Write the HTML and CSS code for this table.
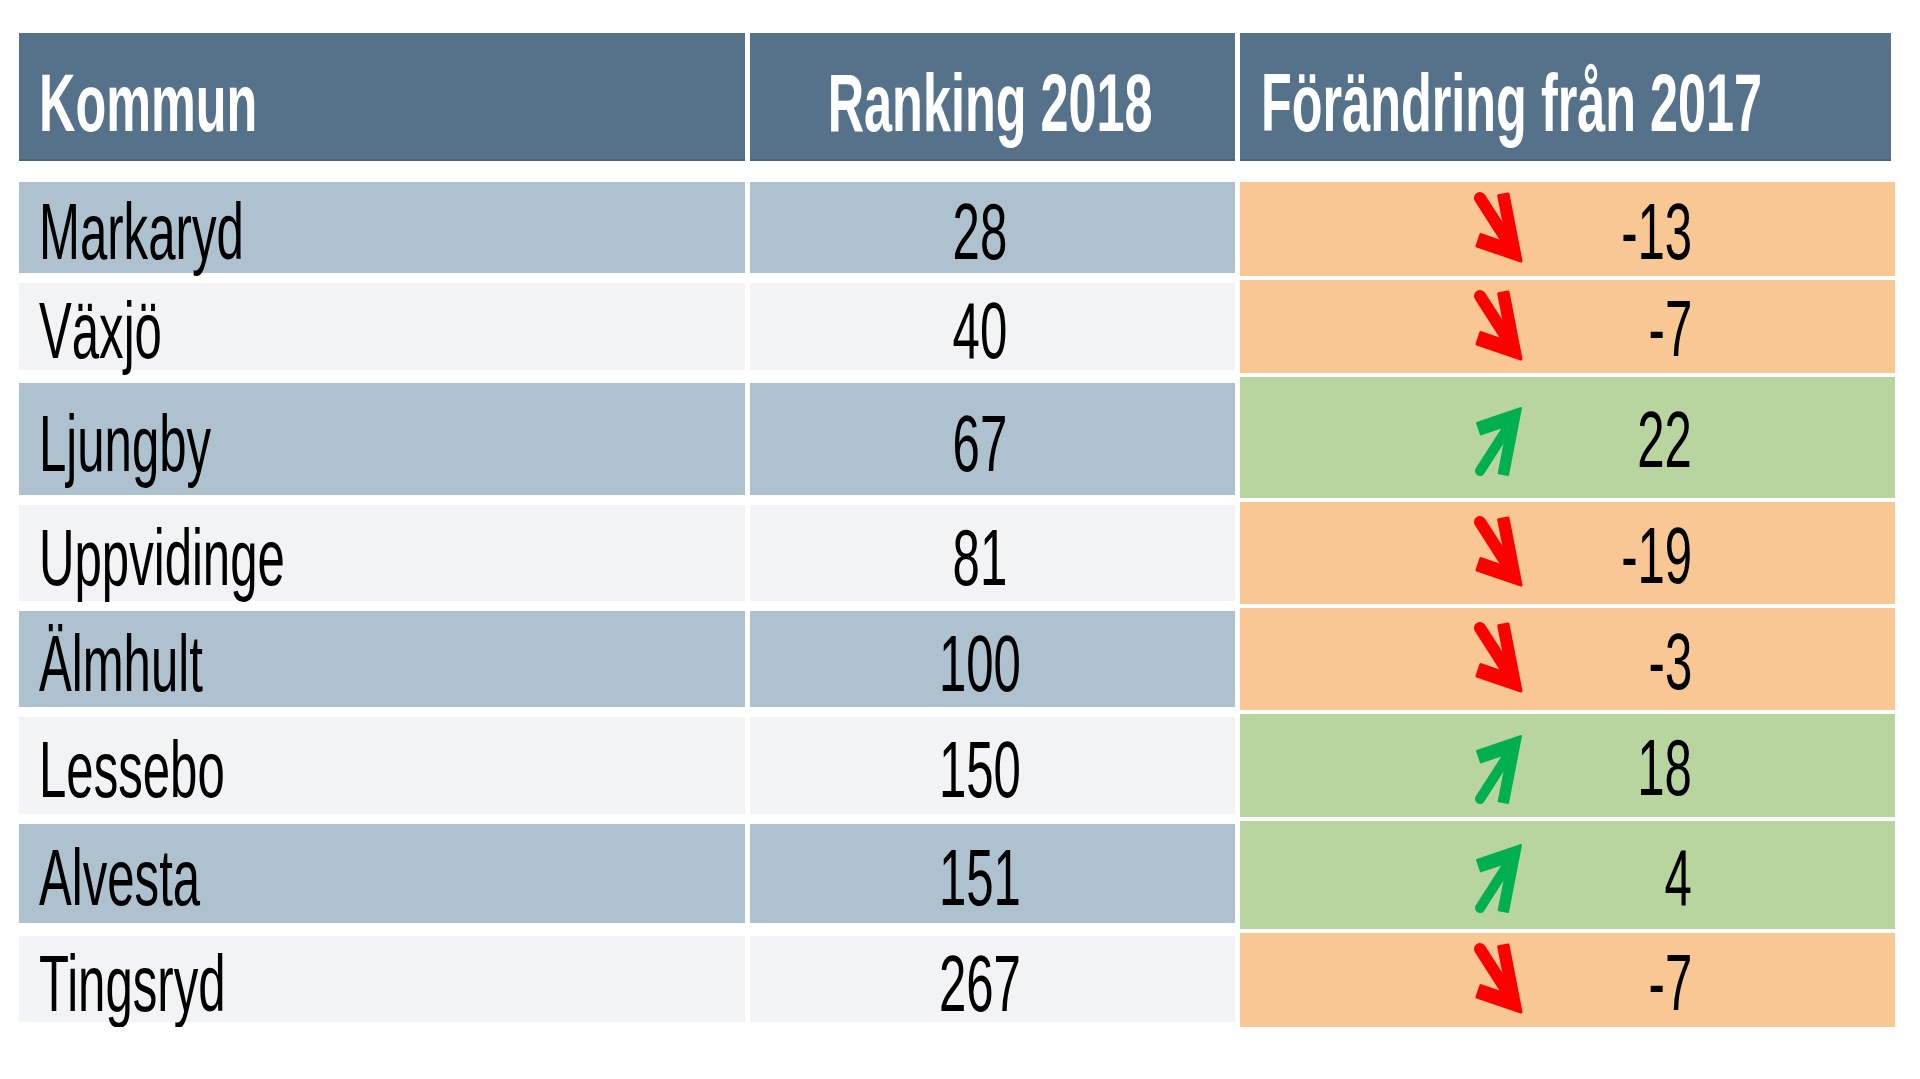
FILE: index.html
```html
<!DOCTYPE html>
<html lang="sv">
<head>
<meta charset="utf-8">
<title>Ranking 2018</title>
<link rel="stylesheet" href="styles.css">
</head>
<body>
<div class="table">
  <div class="head">
    <div class="hc hc-name"><span class="t">Kommun</span></div>
    <div class="hc hc-rank"><span class="t tc">Ranking 2018</span></div>
    <div class="hc hc-change"><span class="t">Förändring från 2017</span></div>
  </div>

  <div class="row r1 odd">
    <div class="c name"><span class="t">Markaryd</span></div>
    <div class="c rank"><span class="t tc">28</span></div>
    <div class="c change down">
      <svg class="arrow" viewBox="0 0 50 70" width="50" height="70"><path class="shaft" d="M8 6 L40 56"/><path class="head" d="M5 54 L49 69 L36 2 L26.7 3.8 L36 51.8 L8.9 42.6 Z"/></svg>
      <div class="num"><span class="t tr">-13</span></div>
    </div>
  </div>

  <div class="row r2 even">
    <div class="c name"><span class="t">Växjö</span></div>
    <div class="c rank"><span class="t tc">40</span></div>
    <div class="c change down">
      <svg class="arrow" viewBox="0 0 50 70" width="50" height="70"><path class="shaft" d="M8 6 L40 56"/><path class="head" d="M5 54 L49 69 L36 2 L26.7 3.8 L36 51.8 L8.9 42.6 Z"/></svg>
      <div class="num"><span class="t tr">-7</span></div>
    </div>
  </div>

  <div class="row r3 odd">
    <div class="c name"><span class="t">Ljungby</span></div>
    <div class="c rank"><span class="t tc">67</span></div>
    <div class="c change up">
      <svg class="arrow" viewBox="0 0 50 70" width="50" height="70"><path class="shaft" d="M8 6 L40 56"/><path class="head" d="M5 54 L49 69 L36 2 L26.7 3.8 L36 51.8 L8.9 42.6 Z"/></svg>
      <div class="num"><span class="t tr">22</span></div>
    </div>
  </div>

  <div class="row r4 even">
    <div class="c name"><span class="t">Uppvidinge</span></div>
    <div class="c rank"><span class="t tc">81</span></div>
    <div class="c change down">
      <svg class="arrow" viewBox="0 0 50 70" width="50" height="70"><path class="shaft" d="M8 6 L40 56"/><path class="head" d="M5 54 L49 69 L36 2 L26.7 3.8 L36 51.8 L8.9 42.6 Z"/></svg>
      <div class="num"><span class="t tr">-19</span></div>
    </div>
  </div>

  <div class="row r5 odd">
    <div class="c name"><span class="t">Älmhult</span></div>
    <div class="c rank"><span class="t tc">100</span></div>
    <div class="c change down">
      <svg class="arrow" viewBox="0 0 50 70" width="50" height="70"><path class="shaft" d="M8 6 L40 56"/><path class="head" d="M5 54 L49 69 L36 2 L26.7 3.8 L36 51.8 L8.9 42.6 Z"/></svg>
      <div class="num"><span class="t tr">-3</span></div>
    </div>
  </div>

  <div class="row r6 even">
    <div class="c name"><span class="t">Lessebo</span></div>
    <div class="c rank"><span class="t tc">150</span></div>
    <div class="c change up">
      <svg class="arrow" viewBox="0 0 50 70" width="50" height="70"><path class="shaft" d="M8 6 L40 56"/><path class="head" d="M5 54 L49 69 L36 2 L26.7 3.8 L36 51.8 L8.9 42.6 Z"/></svg>
      <div class="num"><span class="t tr">18</span></div>
    </div>
  </div>

  <div class="row r7 odd">
    <div class="c name"><span class="t">Alvesta</span></div>
    <div class="c rank"><span class="t tc">151</span></div>
    <div class="c change up">
      <svg class="arrow" viewBox="0 0 50 70" width="50" height="70"><path class="shaft" d="M8 6 L40 56"/><path class="head" d="M5 54 L49 69 L36 2 L26.7 3.8 L36 51.8 L8.9 42.6 Z"/></svg>
      <div class="num"><span class="t tr">4</span></div>
    </div>
  </div>

  <div class="row r8 even">
    <div class="c name"><span class="t">Tingsryd</span></div>
    <div class="c rank"><span class="t tc">267</span></div>
    <div class="c change down">
      <svg class="arrow" viewBox="0 0 50 70" width="50" height="70"><path class="shaft" d="M8 6 L40 56"/><path class="head" d="M5 54 L49 69 L36 2 L26.7 3.8 L36 51.8 L8.9 42.6 Z"/></svg>
      <div class="num"><span class="t tr">-7</span></div>
    </div>
  </div>
</div>
</body>
</html>
```

FILE: styles.css
```css
html, body {
  margin: 0;
  padding: 0;
  background: #ffffff;
  overflow: hidden;
}

body {
  font-family: "Liberation Sans", Arial, sans-serif;
  color: #000;
}

.table {
  padding: 33px 0 0 19px;
  display: flex;
  flex-direction: column;
  gap: 4px;
}

.head,
.row {
  display: grid;
  grid-template-columns: 726px 485px 655px;
  grid-template-rows: minmax(0, 1fr);
  column-gap: 5px;
}

.head {
  height: 128px;
  margin-bottom: 17px;
}

.hc {
  background: #56728b;
  border-bottom: 2px solid #4b657c;
  color: #ffffff;
  font-weight: bold;
  font-size: 81px;
  line-height: 1;
  display: flex;
  align-items: center;
  padding-top: 14px;
  box-sizing: border-box;
  white-space: nowrap;
}

.hc-name { padding-left: 20px; }
.hc-rank { justify-content: center; padding-right: 4px; }
.hc-change { padding-left: 21px; margin-right: 4px; }

/* condensed look of the original */
.t {
  display: inline-block;
  transform: scaleX(0.622);
  transform-origin: left center;
  white-space: nowrap;
  line-height: 1;
}
.t.tc { transform-origin: center center; }
.t.tr { transform-origin: right center; }

.c .t { transform: translateY(4px) scaleX(0.622); }
.change .t { transform: translateY(2px) scaleX(0.622); }

.r1 { height: 94px; }
.r2 { height: 93px; }
.r3 { height: 121px; }
.r4 { height: 102px; }
.r5 { height: 102px; }
.r6 { height: 103px; }
.r7 { height: 108px; }
.r8 { height: 94px; }

.c {
  font-size: 79px;
  line-height: 1;
  display: flex;
  align-items: center;
  box-sizing: border-box;
  min-height: 0;
  overflow: visible;
}

.name,
.rank {
  margin: 3px 0;
}
.r1 .name, .r1 .rank { margin-top: 0; }
.r3 .name, .r3 .rank { margin-top: 6px; }
.r7 .name, .r7 .rank { margin-bottom: 6px; }
.r8 .name, .r8 .rank { margin-bottom: 5px; }

.name { padding-left: 20px; }
.rank { justify-content: center; padding-right: 26px; }

.odd .name, .odd .rank { background: #aec1cf; }
.even .name, .even .rank { background: #f2f3f5; }

.change {
  padding-left: 232px;
}
.down { background: #f8c793; }
.up { background: #b9d59f; }

.arrow {
  display: block;
  flex: none;
  overflow: visible;
}
.down .arrow { color: #ff0000; margin-top: -4px; }
.up .arrow { color: #00b050; transform: scaleY(-1); margin-top: 8px; }

.arrow .shaft {
  fill: none;
  stroke: currentColor;
  stroke-width: 12;
  stroke-linecap: round;
}
.arrow .head {
  fill: currentColor;
  stroke: currentColor;
  stroke-width: 3;
  stroke-linejoin: round;
}
.up .arrow .shaft { stroke-width: 10; }
.up .arrow .head { stroke-width: 2; }

.num {
  width: 170px;
  display: flex;
  justify-content: flex-end;
}
```
